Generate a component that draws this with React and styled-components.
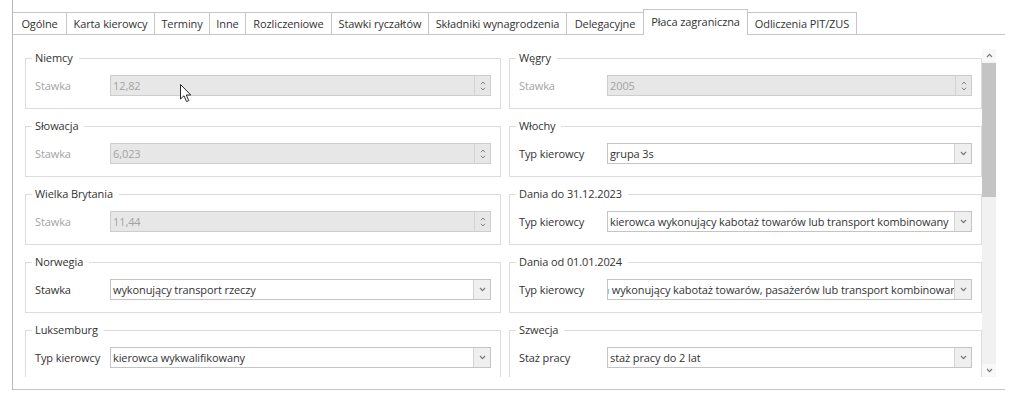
import React from "react";
import styled, { createGlobalStyle } from "styled-components";

const GlobalStyle = createGlobalStyle`
  html, body {
    margin: 0;
    background: #ffffff;
  }
  body {
    font-family: "Open Sans", "Noto Sans", sans-serif;
    font-size: 11px;
    letter-spacing: -0.1px;
    color: #333333;
  }
`;

const tabs = [
  { title: "Ogólne", width: 54 },
  { title: "Karta kierowcy", width: 88 },
  { title: "Terminy", width: 55 },
  { title: "Inne", width: 36 },
  { title: "Rozliczeniowe", width: 86 },
  { title: "Stawki ryczałtów", width: 97 },
  { title: "Składniki wynagrodzenia", width: 138 },
  { title: "Delegacyjne", width: 77 },
  { title: "Płaca zagraniczna", width: 105, active: true },
  { title: "Odliczenia PIT/ZUS", width: 109 },
];

const leftGroups = [
  { title: "Niemcy", label: "Stawka", kind: "spin", value: "12,82", cursor: true },
  { title: "Słowacja", label: "Stawka", kind: "spin", value: "6,023" },
  { title: "Wielka Brytania", label: "Stawka", kind: "spin", value: "11,44" },
  { title: "Norwegia", label: "Stawka", kind: "select", value: "wykonujący transport rzeczy" },
  { title: "Luksemburg", label: "Typ kierowcy", kind: "select", value: "kierowca wykwalifikowany" },
];

const rightGroups = [
  { title: "Węgry", label: "Stawka", kind: "spin", value: "2005" },
  { title: "Włochy", label: "Typ kierowcy", kind: "select", value: "grupa 3s" },
  {
    title: "Dania do 31.12.2023",
    label: "Typ kierowcy",
    kind: "select",
    value: "kierowca wykonujący kabotaż towarów lub transport kombinowany",
  },
  {
    title: "Dania od 01.01.2024",
    label: "Typ kierowcy",
    kind: "select",
    value: "kierowca wykonujący kabotaż towarów, pasażerów lub transport kombinowany",
    shift: 46,
  },
  { title: "Szwecja", label: "Staż pracy", kind: "select", value: "staż pracy do 2 lat" },
];

function Chevron({ up, size = 7 }) {
  return (
    <svg width={size} height={size - 2} viewBox="0 0 7 5">
      <path
        d={up ? "M1 4 L3.5 1.3 L6 4" : "M1 1 L3.5 3.7 L6 1"}
        fill="none"
        stroke="#7a7a7a"
        strokeWidth="1.2"
      />
    </svg>
  );
}

function Cursor() {
  return (
    <CursorIcon width="12" height="19" viewBox="0 0 12 19">
      <path
        d="M0.5 0.5 L0.5 15 L4 11.8 L6.6 17.6 L8.8 16.6 L6.3 11 L10.8 11 Z"
        fill="#ffffff"
        stroke="#2a2a2a"
        strokeWidth="1"
        strokeLinejoin="round"
      />
    </CursorIcon>
  );
}

function Field({ group, labelWidth }) {
  const disabled = group.kind === "spin";
  return (
    <Group>
      <Legend>{group.title}</Legend>
      <Row>
        <Label $width={labelWidth} $disabled={disabled}>
          {group.label}
        </Label>
        <Input $disabled={disabled}>
          <Value $disabled={disabled}>
            <span style={group.shift ? { marginLeft: -group.shift } : undefined}>
              {group.value}
            </span>
          </Value>
          {disabled ? (
            <Spinner>
              <Chevron up size={6} />
              <Chevron size={6} />
            </Spinner>
          ) : (
            <DropButton>
              <Chevron />
            </DropButton>
          )}
          {group.cursor && <Cursor />}
        </Input>
      </Row>
    </Group>
  );
}

export default function App() {
  return (
    <>
      <GlobalStyle />
      <Window>
        <TabBar>
          {tabs.map((t) => (
            <Tab key={t.title} $width={t.width} $active={t.active}>
              {t.title}
            </Tab>
          ))}
        </TabBar>
        <Panel>
          <ScrollArea>
            <Column $width={476}>
              {leftGroups.map((g) => (
                <Field key={g.title} group={g} labelWidth={75} />
              ))}
            </Column>
            <Column $width={473}>
              {rightGroups.map((g) => (
                <Field key={g.title} group={g} labelWidth={88} />
              ))}
            </Column>
          </ScrollArea>
          <Scrollbar>
            <ScrollButton>
              <Chevron up />
            </ScrollButton>
            <Track>
              <Thumb />
            </Track>
            <ScrollButton>
              <Chevron />
            </ScrollButton>
          </Scrollbar>
        </Panel>
      </Window>
    </>
  );
}

const Window = styled.div`
  margin-left: 12px;
  width: 993px;
  padding-top: 12px;
  border-left: 1px solid #b9b9b9;
  box-sizing: border-box;
`;

const TabBar = styled.div`
  display: flex;
  align-items: flex-end;
  height: 22px;
`;

const Tab = styled.div`
  position: relative;
  width: ${(p) => p.$width}px;
  height: ${(p) => (p.$active ? 26 : 22)}px;
  margin-bottom: ${(p) => (p.$active ? -1 : 0)}px;
  margin-left: ${(p) => (p.$active ? -1 : 0)}px;
  z-index: ${(p) => (p.$active ? 1 : 0)};
  box-sizing: border-box;
  display: flex;
  align-items: center;
  justify-content: center;
  padding-bottom: ${(p) => (p.$active ? 3 : 0)}px;
  background: #ffffff;
  border-top: 1px solid #c6c6c6;
  border-right: 1px solid #c6c6c6;
  border-left: ${(p) => (p.$active ? "1px solid #c6c6c6" : "none")};
  color: #333333;
  white-space: nowrap;
`;

const Panel = styled.div`
  display: flex;
  height: 356px;
  box-sizing: border-box;
  padding: 14px 9px 12px 0;
  border-top: 1px solid #c6c6c6;
  border-bottom: 1px solid #c6c6c6;
`;

const ScrollArea = styled.div`
  flex: 1;
  display: flex;
  gap: 8px;
  padding: 1px 0 0 12px;
  overflow: hidden;
`;

const Column = styled.div`
  width: ${(p) => p.$width}px;
  flex-shrink: 0;
  display: flex;
  flex-direction: column;
  gap: 9px;
`;

const Group = styled.fieldset`
  margin: 0;
  padding: 9px 9px 12px 9px;
  border: 1px solid #dcdcdc;
  min-width: 0;
`;

const Legend = styled.legend`
  margin-left: -3px;
  padding: 0 6px 0 3px;
  line-height: 16px;
  color: #333333;
`;

const Row = styled.div`
  display: flex;
  align-items: center;
  height: 21px;
`;

const Label = styled.div`
  width: ${(p) => p.$width}px;
  flex-shrink: 0;
  color: ${(p) => (p.$disabled ? "#a3a3a3" : "#333333")};
  white-space: nowrap;
`;

const Input = styled.div`
  position: relative;
  flex: 1;
  min-width: 0;
  height: 21px;
  box-sizing: border-box;
  display: flex;
  border: 1px solid ${(p) => (p.$disabled ? "#cdcdcd" : "#c4c4c4")};
  background: ${(p) => (p.$disabled ? "#e7e7e7" : "#ffffff")};
`;

const Value = styled.div`
  flex: 1;
  min-width: 0;
  overflow: hidden;
  white-space: nowrap;
  padding-left: 2px;
  line-height: 19px;
  color: ${(p) => (p.$disabled ? "#a3a3a3" : "#333333")};
`;

const Spinner = styled.div`
  width: 15px;
  flex-shrink: 0;
  display: flex;
  flex-direction: column;
  align-items: center;
  justify-content: center;
  gap: 2px;
  border-left: 1px solid #d3d3d3;
`;

const DropButton = styled.div`
  width: 16px;
  flex-shrink: 0;
  display: flex;
  align-items: center;
  justify-content: center;
  background: #efefef;
  border-left: 1px solid #d3d3d3;
`;

const CursorIcon = styled.svg`
  position: absolute;
  left: 69px;
  top: 8px;
`;

const Scrollbar = styled.div`
  width: 14px;
  flex-shrink: 0;
  display: flex;
  flex-direction: column;
  background: #f1f1f1;
`;

const ScrollButton = styled.div`
  height: 13px;
  display: flex;
  align-items: center;
  justify-content: center;
  background: #f8f8f8;
`;

const Track = styled.div`
  flex: 1;
  padding-top: 1px;
`;

const Thumb = styled.div`
  height: 134px;
  background: #c4c4c4;
`;
